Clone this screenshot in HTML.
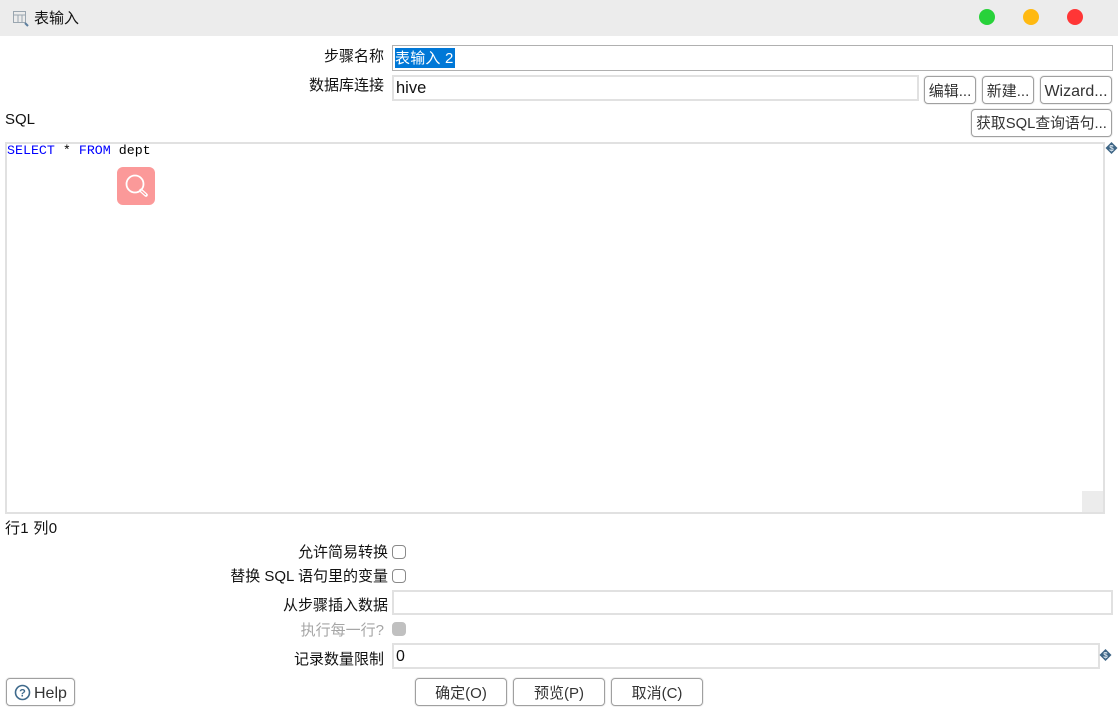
<!DOCTYPE html>
<html><head><meta charset="utf-8">
<style>
html,body{margin:0;padding:0;background:#fff;}
body{width:1118px;height:712px;position:relative;overflow:hidden;font-family:"Liberation Sans","Noto Sans CJK SC",sans-serif;font-size:15px;color:#111;}
.a{position:absolute;white-space:nowrap;}
.lbl{position:absolute;text-align:right;white-space:nowrap;line-height:20px;height:20px;}
.inp{position:absolute;box-sizing:border-box;border:2px solid #e1e1e1;background:#fff;font-size:15px;line-height:20px;padding-left:2px;}
.btn{position:absolute;box-sizing:border-box;border:1px solid #a0a0a0;border-radius:4px;background:#fff;text-align:center;font-size:15px;line-height:29px;color:#333;white-space:nowrap;box-shadow:0 0 0 1px #efefef;}
.cb{position:absolute;box-sizing:border-box;width:14px;height:14px;border:1px solid #8a8a8a;border-radius:4px;background:#fff;}
.dot{position:absolute;width:16px;height:16px;border-radius:50%;top:9px;}
</style></head><body>
<div class="a" style="left:0;top:0;width:1118px;height:36px;background:#ececec;"></div>
<svg class="a" style="left:12px;top:10px" width="17" height="17" viewBox="0 0 17 17"><path d="M1.5 1.5H13.5V12.5H1.5ZM1.5 5H13.5M6 5V12.5M10 5V12.5" fill="none" stroke="#9aa6b0" stroke-width="1"/><path d="M13 13L16 16" stroke="#5d7f9f" stroke-width="2"/></svg>
<div class="a" style="left:34px;top:9px;line-height:20px;">表输入</div>
<div class="dot" style="left:979px;background:#28d23a;"></div>
<div class="dot" style="left:1023px;background:#ffb911;"></div>
<div class="dot" style="left:1067px;background:#ff3636;"></div>

<div class="lbl" style="right:734px;top:47px;">步骤名称</div>
<div class="inp" style="left:392px;top:45px;width:721px;height:26px;border:1px solid #b0b0b0;padding:2px 0 0 2px;"><span style="background:#0078d7;color:#fff;display:inline-block;height:20px;line-height:22px;width:60px;letter-spacing:.2px;">表输入 2</span></div>
<div class="lbl" style="right:734px;top:76px;">数据库连接</div>
<div class="inp" style="left:392px;top:75px;width:527px;height:26px;padding-top:1px;font-size:16.5px;">hive</div>
<div class="btn" style="left:924px;top:76px;width:52px;height:28px;line-height:30px;">编辑...</div>
<div class="btn" style="left:982px;top:76px;width:52px;height:28px;line-height:30px;">新建...</div>
<div class="btn" style="left:1040px;top:76px;width:72px;height:28px;line-height:30px;font-size:16px;">Wizard...</div>
<div class="a" style="left:5px;top:110px;line-height:20px;">SQL</div>
<div class="btn" style="left:971px;top:109px;width:141px;height:28px;font-size:14.8px;">获取SQL查询语句...</div>

<div class="a" style="left:5px;top:142px;width:1100px;height:372px;box-sizing:border-box;border:2px solid #e1e1e1;background:#fff;"></div>
<div class="a" style="left:1082px;top:491px;width:21px;height:21px;background:#ececec;"></div>
<div class="a" style="left:7px;top:143px;font-family:'Liberation Mono',monospace;font-size:13.3px;line-height:16px;color:#000;"><span style="color:#0000ff">SELECT</span> * <span style="color:#0000ff">FROM</span> dept</div>
<div class="a" style="left:117px;top:167px;width:38px;height:38px;border-radius:6px;background:#fb9999;"></div>
<svg class="a" style="left:117px;top:167px" width="38" height="38" viewBox="0 0 38 38"><circle cx="18" cy="17" r="8.5" fill="none" stroke="#fff" stroke-width="1.8"/><path d="M24 23.5L29 28" stroke="#fff" stroke-width="3.6" stroke-linecap="round"/><path d="M24.7 24.2L28.5 27.6" stroke="#fb9999" stroke-width="1.2" stroke-linecap="round"/></svg>
<svg class="a" style="left:1105px;top:142px" width="13" height="13" viewBox="0 0 13 13"><path d="M6.5 0L12.5 6L6.5 12L.5 6Z" fill="#3f6686"/><text x="6.5" y="9" font-size="8" font-weight="bold" text-anchor="middle" fill="#d5e2ec" font-family="Liberation Sans">$</text></svg>

<div class="a" style="left:5px;top:519px;line-height:20px;letter-spacing:.3px;">行1 列0</div>
<div class="lbl" style="right:730px;top:543px;">允许简易转换</div>
<div class="cb" style="left:392px;top:545px;"></div>
<div class="lbl" style="right:730px;top:567px;">替换 SQL 语句里的变量</div>
<div class="cb" style="left:392px;top:569px;"></div>
<div class="lbl" style="right:730px;top:596px;">从步骤插入数据</div>
<div class="inp" style="left:392px;top:590px;width:721px;height:25px;"></div>
<div class="lbl" style="right:734px;top:621px;color:#a6a6a6;">执行每一行?</div>
<div class="cb" style="left:392px;top:622px;background:#c0c0c0;border-color:#c0c0c0;"></div>
<div class="lbl" style="right:734px;top:650px;">记录数量限制</div>
<div class="inp" style="left:392px;top:643px;width:708px;height:26px;padding-top:2px;font-size:16px;">0</div>
<svg class="a" style="left:1099px;top:649px" width="13" height="13" viewBox="0 0 13 13"><path d="M6.5 0L12.5 6L6.5 12L.5 6Z" fill="#3f6686"/><text x="6.5" y="9" font-size="8" font-weight="bold" text-anchor="middle" fill="#d5e2ec" font-family="Liberation Sans">$</text></svg>

<div class="btn" style="left:6px;top:678px;width:69px;height:28px;font-size:16px;text-align:left;padding-left:27px;">Help</div>
<svg class="a" style="left:14px;top:684px" width="17" height="17" viewBox="0 0 17 17"><circle cx="8.5" cy="8.5" r="7" fill="none" stroke="#3f6a8c" stroke-width="1.6"/><text x="8.5" y="12.5" font-size="11" font-weight="bold" text-anchor="middle" fill="#3f6a8c" font-family="Liberation Sans">?</text></svg>
<div class="btn" style="left:415px;top:678px;width:92px;height:28px;">确定(O)</div>
<div class="btn" style="left:513px;top:678px;width:92px;height:28px;">预览(P)</div>
<div class="btn" style="left:611px;top:678px;width:92px;height:28px;">取消(C)</div>
</body></html>
